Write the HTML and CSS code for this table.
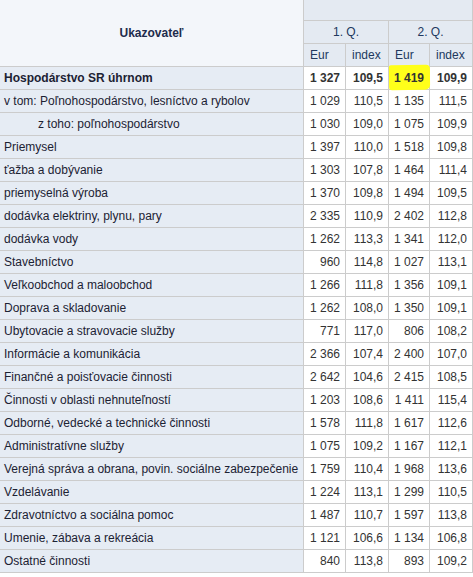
FILE: index.html
```html
<!DOCTYPE html>
<html lang="sk">
<head>
<meta charset="utf-8">
<title>Mzdy</title>
<link rel="stylesheet" href="styles.css">
</head>
<body>
<table class="grid">
  <colgroup>
    <col class="c-label">
    <col class="c-eur1">
    <col class="c-idx1">
    <col class="c-eur2">
    <col class="c-idx2">
  </colgroup>
  <thead>
    <tr class="h1">
      <th class="corner" rowspan="3">Ukazovateľ</th>
      <th class="hd" colspan="4"></th>
    </tr>
    <tr class="h2">
      <th class="hd" colspan="2">1. Q.</th>
      <th class="hd" colspan="2">2. Q.</th>
    </tr>
    <tr class="h3">
      <th class="hd unit">Eur</th>
      <th class="hd unit">index</th>
      <th class="hd unit">Eur</th>
      <th class="hd unit">index</th>
    </tr>
  </thead>
  <tbody>
    <tr class="total"><td class="lbl">Hospodárstvo SR úhrnom</td><td class="num">1 327</td><td class="num">109,5</td><td class="num mark"><span class="hl">1 419</span></td><td class="num">109,9</td></tr>
    <tr><td class="lbl">v tom: Poľnohospodárstvo, lesníctvo a rybolov</td><td class="num">1 029</td><td class="num">110,5</td><td class="num">1 135</td><td class="num">111,5</td></tr>
    <tr><td class="lbl sub">z toho: poľnohospodárstvo</td><td class="num">1 030</td><td class="num">109,0</td><td class="num">1 075</td><td class="num">109,9</td></tr>
    <tr><td class="lbl">Priemysel</td><td class="num">1 397</td><td class="num">110,0</td><td class="num">1 518</td><td class="num">109,8</td></tr>
    <tr><td class="lbl">ťažba a dobývanie</td><td class="num">1 303</td><td class="num">107,8</td><td class="num">1 464</td><td class="num">111,4</td></tr>
    <tr><td class="lbl">priemyselná výroba</td><td class="num">1 370</td><td class="num">109,8</td><td class="num">1 494</td><td class="num">109,5</td></tr>
    <tr><td class="lbl">dodávka elektriny, plynu, pary</td><td class="num">2 335</td><td class="num">110,9</td><td class="num">2 402</td><td class="num">112,8</td></tr>
    <tr><td class="lbl">dodávka vody</td><td class="num">1 262</td><td class="num">113,3</td><td class="num">1 341</td><td class="num">112,0</td></tr>
    <tr><td class="lbl">Stavebníctvo</td><td class="num">960</td><td class="num">114,8</td><td class="num">1 027</td><td class="num">113,1</td></tr>
    <tr><td class="lbl">Veľkoobchod a maloobchod</td><td class="num">1 266</td><td class="num">111,8</td><td class="num">1 356</td><td class="num">109,1</td></tr>
    <tr><td class="lbl">Doprava a skladovanie</td><td class="num">1 262</td><td class="num">108,0</td><td class="num">1 350</td><td class="num">109,1</td></tr>
    <tr><td class="lbl">Ubytovacie a stravovacie služby</td><td class="num">771</td><td class="num">117,0</td><td class="num">806</td><td class="num">108,2</td></tr>
    <tr><td class="lbl">Informácie a komunikácia</td><td class="num">2 366</td><td class="num">107,4</td><td class="num">2 400</td><td class="num">107,0</td></tr>
    <tr><td class="lbl">Finančné a poisťovacie činnosti</td><td class="num">2 642</td><td class="num">104,6</td><td class="num">2 415</td><td class="num">108,5</td></tr>
    <tr><td class="lbl">Činnosti v oblasti nehnuteľností</td><td class="num">1 203</td><td class="num">108,6</td><td class="num">1 411</td><td class="num">115,4</td></tr>
    <tr><td class="lbl">Odborné, vedecké a technické činnosti</td><td class="num">1 578</td><td class="num">111,8</td><td class="num">1 617</td><td class="num">112,6</td></tr>
    <tr><td class="lbl">Administratívne služby</td><td class="num">1 075</td><td class="num">109,2</td><td class="num">1 167</td><td class="num">112,1</td></tr>
    <tr><td class="lbl">Verejná správa a obrana, povin. sociálne zabezpečenie</td><td class="num">1 759</td><td class="num">110,4</td><td class="num">1 968</td><td class="num">113,6</td></tr>
    <tr><td class="lbl">Vzdelávanie</td><td class="num">1 224</td><td class="num">113,1</td><td class="num">1 299</td><td class="num">110,5</td></tr>
    <tr><td class="lbl">Zdravotníctvo a sociálna pomoc</td><td class="num">1 487</td><td class="num">110,7</td><td class="num">1 597</td><td class="num">113,8</td></tr>
    <tr><td class="lbl">Umenie, zábava a rekreácia</td><td class="num">1 121</td><td class="num">106,6</td><td class="num">1 134</td><td class="num">106,8</td></tr>
    <tr><td class="lbl">Ostatné činnosti</td><td class="num">840</td><td class="num">113,8</td><td class="num">893</td><td class="num">109,2</td></tr>
  </tbody>
</table>
</body>
</html>
```
FILE: styles.css
```css
html, body {
  margin: 0;
  padding: 0;
  background: #ffffff;
}

.grid {
  border-collapse: separate;
  border-spacing: 0;
  table-layout: fixed;
  width: 473px;
  font-family: "Liberation Sans", Arial, sans-serif;
  font-size: 12px;
  color: #333333;
}

.c-label { width: 304px; }
.c-eur1 { width: 42px; }
.c-idx1 { width: 43px; }
.c-eur2 { width: 41px; }
.c-idx2 { width: 43px; }

.grid th,
.grid td {
  box-sizing: border-box;
  border-right: 1px solid #cccccc;
  border-bottom: 1px solid #cccccc;
  padding: 0;
  white-space: nowrap;
  overflow: visible;
}

.grid .h1 .hd { height: 21px; }
.grid .h2 .hd,
.grid .h3 .hd { height: 23px; }

.grid .corner {
  background: #f3f6fa;
  color: #1e2c4c;
  font-weight: bold;
  text-align: center;
  vertical-align: middle;
}

.grid .hd {
  background: #e4eaf2;
  color: #21385e;
  font-weight: normal;
  text-align: center;
  vertical-align: middle;
}

.grid .hd.unit {
  text-align: left;
  padding-left: 6px;
}

.grid td {
  height: 23px;
  vertical-align: middle;
}

.grid .lbl {
  background: #e6ecf4;
  color: #1c2233;
  padding-left: 4px;
  text-align: left;
}

.grid .lbl.sub { padding-left: 38px; }

.grid .num {
  background: #ffffff;
  color: #333333;
  text-align: right;
  padding-right: 5px;
}

.grid .total td { font-weight: bold; }

.grid .mark {
  position: relative;
}

.hl {
  position: relative;
  z-index: 1;
}

.grid .mark::before {
  content: "";
  position: absolute;
  left: 0;
  top: -2px;
  width: 41px;
  height: 25px;
  background: #ffff1a;
  border-radius: 2px 4px 5px 3px;
  transform: rotate(-0.6deg);
}
```
